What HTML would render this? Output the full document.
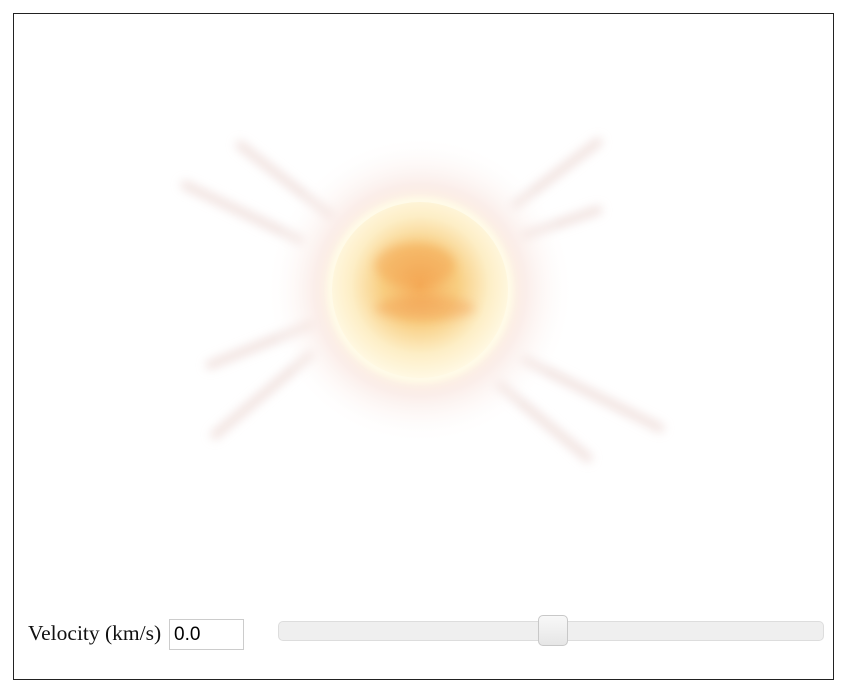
<!DOCTYPE html>
<html><head><style>
html,body{margin:0;padding:0;background:#fff;width:846px;height:693px;overflow:hidden}
.frame{position:absolute;left:13px;top:13px;width:819px;height:665px;border:1px solid #222}
.lbl{position:absolute;left:28px;top:621px;font:21.5px "Liberation Serif",serif;color:#111}
.inp{position:absolute;left:169px;top:619px;border:1px solid #ccc;font:19px "Liberation Sans",sans-serif;line-height:29px;padding-left:4px;box-sizing:border-box;width:75px;height:31px}
.track{position:absolute;left:278px;top:621px;width:546px;height:20px;border:1px solid #ddd;border-radius:5px;background:#efefef;box-sizing:border-box}
.thumb{position:absolute;left:538px;top:615px;width:30px;height:31px;border:1px solid #c8c8c8;border-radius:5px;background:linear-gradient(#f8f8f8,#e6e6e6);box-sizing:border-box}
</style></head><body>
<div class="frame"></div>
<svg width="846" height="693" style="position:absolute;left:0;top:0">
<defs>
<filter id="b" x="-50%" y="-50%" width="200%" height="200%"><feGaussianBlur stdDeviation="5"/></filter>
<filter id="b2" x="-50%" y="-50%" width="200%" height="200%"><feGaussianBlur stdDeviation="3"/></filter>
<radialGradient id="g" cx="420" cy="290" r="155" gradientUnits="userSpaceOnUse">
<stop offset="0.55" stop-color="#fff4e0"/>
<stop offset="0.68" stop-color="#f9e6e0" stop-opacity="0.7"/>
<stop offset="1" stop-color="#fff" stop-opacity="0"/>
</radialGradient>
<radialGradient id="s" cx="420" cy="285" r="92" gradientUnits="userSpaceOnUse">
<stop offset="0" stop-color="#f5ad5a"/>
<stop offset="0.4" stop-color="#f8cd80"/>
<stop offset="0.75" stop-color="#fdeec6"/>
<stop offset="1" stop-color="#fff8e2"/>
</radialGradient>
</defs>
<g stroke="#ecd8d4" stroke-width="9" stroke-linecap="round" filter="url(#b)" opacity="0.75">
<line x1="330" y1="215" x2="240" y2="145"/>
<line x1="300" y1="240" x2="185" y2="185"/>
<line x1="310" y1="325" x2="210" y2="365"/>
<line x1="310" y1="355" x2="215" y2="435"/>
<line x1="515" y1="205" x2="598" y2="142"/>
<line x1="525" y1="235" x2="598" y2="210"/>
<line x1="525" y1="360" x2="660" y2="428"/>
<line x1="500" y1="385" x2="588" y2="458"/>
</g>
<circle cx="420" cy="290" r="155" fill="url(#g)"/>
<circle cx="420" cy="290" r="93" fill="#fffbe8" filter="url(#b2)"/>
<circle cx="420" cy="290" r="88" fill="url(#s)"/>
<ellipse cx="415" cy="265" rx="40" ry="22" fill="#f3a04e" opacity="0.45" filter="url(#b)"/>
<ellipse cx="425" cy="308" rx="50" ry="12" fill="#ef8a40" opacity="0.3" filter="url(#b)"/>
</svg>
<div class="lbl">Velocity (km/s)</div>
<div class="inp">0.0</div>
<div class="track"></div>
<div class="thumb"></div>
</body></html>
